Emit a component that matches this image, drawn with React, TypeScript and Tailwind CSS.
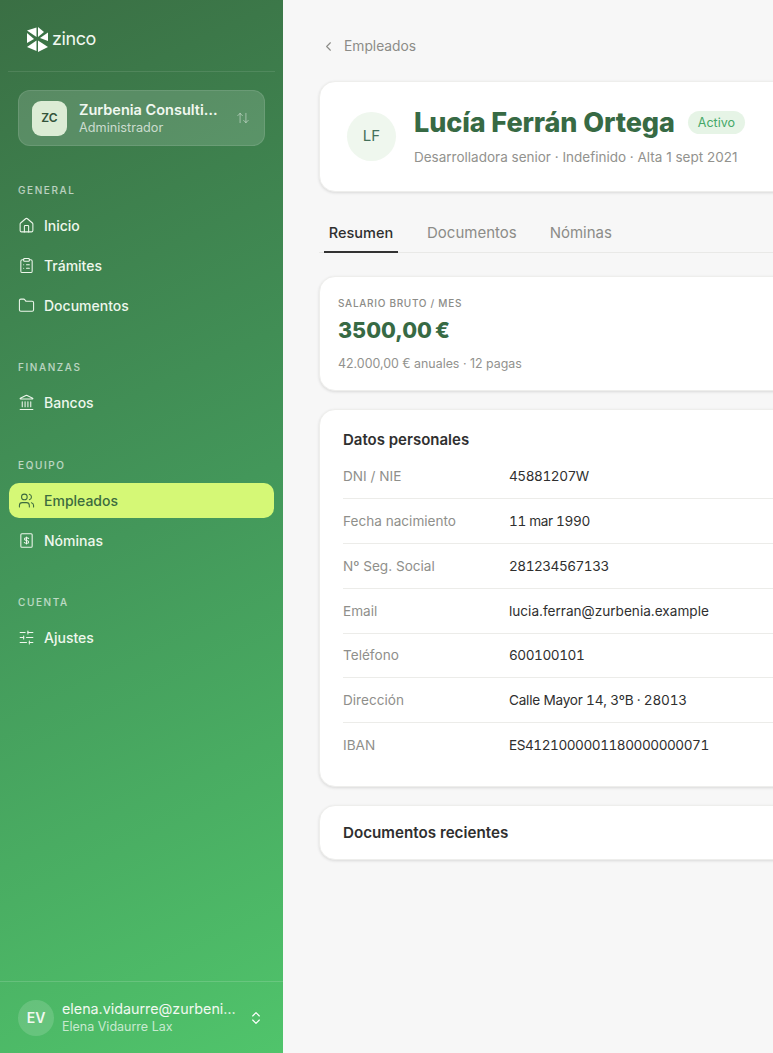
import { ChevronLeft, ChevronsUpDown, ArrowUpDown, House, ClipboardList, Folder, Landmark, Users, SlidersHorizontal } from "lucide-react";
import type { ComponentType, ReactNode } from "react";

type IconProps = { className?: string; strokeWidth?: number };
type NavItem = { label: string; icon: ComponentType<IconProps>; active?: boolean };

function PayslipIcon({ className, strokeWidth }: IconProps) {
  return (
    <svg viewBox="0 0 24 24" className={className} fill="none" stroke="currentColor" strokeWidth={strokeWidth} strokeLinecap="round" strokeLinejoin="round">
      <rect x="4" y="2.5" width="16" height="19" rx="1.5" />
      <path d="M12 7v10" />
      <path d="M15 9.2c-.5-.8-1.6-1.2-3-1.2-1.7 0-3 .8-3 2s1.3 1.7 3 2 3 .8 3 2-1.3 2-3 2c-1.4 0-2.5-.4-3-1.2" />
    </svg>
  );
}

const sections: { title: string; items: NavItem[]; mt: string }[] = [
  { title: "GENERAL", mt: "mt-[38px]", items: [{ label: "Inicio", icon: House }, { label: "Trámites", icon: ClipboardList }, { label: "Documentos", icon: Folder }] },
  { title: "FINANZAS", mt: "mt-[38px]", items: [{ label: "Bancos", icon: Landmark }] },
  { title: "EQUIPO", mt: "mt-[39px]", items: [{ label: "Empleados", icon: Users, active: true }, { label: "Nóminas", icon: PayslipIcon }] },
  { title: "CUENTA", mt: "mt-[38px]", items: [{ label: "Ajustes", icon: SlidersHorizontal }] },
];

// digits in the reference sit between tabular and proportional widths, hence the per-row tracking
const personal = [
  ["DNI / NIE", "45881207W", "tabular-nums tracking-[-0.46px]"],
  ["Fecha nacimiento", "11 mar 1990", "tabular-nums tracking-[-0.36px]"],
  ["Nº Seg. Social", "281234567133", "tabular-nums tracking-[-0.5px]"],
  ["Email", "lucia.ferran@zurbenia.example", ""],
  ["Teléfono", "600100101", "tabular-nums tracking-[-0.45px]"],
  ["Dirección", "Calle Mayor 14, 3ºB · 28013", "tabular-nums tracking-[-0.22px]"],
  ["IBAN", "ES4121000001180000000071", "tabular-nums tracking-[-0.46px]"],
];

function Logo() {
  return (
    <svg viewBox="0 0 21 25" className="h-[25px] w-[21px] shrink-0" fill="#fff">
      <path d="M0 3.5 L9.5 0.5 L9.5 10 Z" />
      <path d="M11 0 L17 5 L11 10 Z" />
      <path d="M21 5.5 L21 14 L13 11 Z" />
      <path d="M0 6 L7 12 L0 16 Z" />
      <path d="M0 20 L9.5 13.5 L9.5 24 Z" />
      <path d="M11 13.5 L21 20 L11 25 Z" />
    </svg>
  );
}

function Sidebar() {
  return (
    <aside className="flex h-full w-[283px] shrink-0 flex-col bg-[linear-gradient(155deg,#3a6f44_0%,#43975a_50%,#50c46b_100%)] text-white">
      <div className="mx-2 flex h-[72px] items-center gap-[4px] border-b border-white/10 pl-[19px] pr-2 pt-[7px]">
        <Logo />
        <span className="text-[18px] leading-none tracking-[-0.4px] text-[#f1f8f0]">zinco</span>
      </div>

      <div className="mx-[18px] mt-[18px] flex h-[56px] items-center gap-[12px] rounded-xl border border-white/10 bg-white/15 pl-[13px] pr-[14px]">
        <div className="flex h-[35px] w-[35px] shrink-0 items-center justify-center rounded-[9px] bg-[#dcecd5] text-[12px] font-semibold text-[#33533a]">ZC</div>
        <div className="min-w-0 flex-1">
          <div className="truncate text-[14.5px] font-semibold leading-[18px] text-[#f1f8f0]">Zurbenia Consulting SL</div>
          <div className="text-[12.7px] leading-[17px] text-white/70">Administrador</div>
        </div>
        <ArrowUpDown className="h-[14px] w-[14px] shrink-0 text-white/50" strokeWidth={1.5} />
      </div>

      <nav className="flex-1">
        {sections.map((s) => (
          <div key={s.title} className={s.mt}>
            <div className="mb-[11px] pl-[18px] text-[10px] font-medium leading-[13px] tracking-[1.6px] text-white/65">{s.title}</div>
            <div className="mx-[9px] flex flex-col gap-[5px]">
              {s.items.map((it) => (
                <div
                  key={it.label}
                  className={
                    it.active
                      ? "flex h-[35px] items-center gap-[9px] rounded-[10px] bg-[#d5f876] pl-[9px] text-[14px] font-medium text-[#3c6b3f]"
                      : "flex h-[35px] items-center gap-[9px] rounded-[10px] pl-[9px] text-[14px] font-medium text-[#eef7ec]"
                  }
                >
                  <it.icon className="h-[17px] w-[17px] shrink-0" strokeWidth={1.5} />
                  <span>{it.label}</span>
                </div>
              ))}
            </div>
          </div>
        ))}
      </nav>

      <div className="flex h-[72px] items-center gap-[8px] border-t border-white/15 pl-[18px] pr-[19px]">
        <div className="flex h-[36px] w-[36px] shrink-0 items-center justify-center rounded-full bg-white/15 text-[14px] font-semibold text-[#f1f8f0]">EV</div>
        <div className="min-w-0 flex-1">
          <div className="truncate text-[14.3px] leading-[18px] text-[#f1f8f0]">elena.vidaurre@zurbenia.example</div>
          <div className="truncate text-[12.5px] leading-[17px] text-white/70">Elena Vidaurre Lax</div>
        </div>
        <ChevronsUpDown className="h-[16px] w-[16px] shrink-0 text-white" strokeWidth={1.75} />
      </div>
    </aside>
  );
}

function Card({ className, children }: { className: string; children: ReactNode }) {
  return <section className={`rounded-[16px] border border-[#eeeeec] bg-white shadow-[0_1px_3px_rgba(0,0,0,0.12)] ${className}`}>{children}</section>;
}

export default function App() {
  return (
    <div className="flex h-screen w-full overflow-hidden bg-[#f7f7f7] font-['Inter',sans-serif]">
      <Sidebar />
      <main className="min-w-0 flex-1 overflow-hidden pl-[36px] pt-[37px]">
        <div className="w-[700px]">
          <div className="flex h-[18px] items-center gap-[8px] pl-[2px] text-[13.8px] text-[#8c8c88]">
            <ChevronLeft className="h-[15px] w-[15px]" strokeWidth={1.75} />
            <span>Empleados</span>
          </div>

          <Card className="mt-[26px] flex h-[111px] items-center gap-[18px] pl-[27px]">
            <div className="flex h-[49px] w-[49px] shrink-0 items-center justify-center rounded-full bg-[#eff7ee] text-[15px] text-[#44705a]">LF</div>
            <div className="-mt-[2px]">
              <div className="flex items-center gap-[13px]">
                <h1 className="text-[27px] font-extrabold leading-[34px] tracking-[-0.1px] text-[#376a44]">Lucía Ferrán Ortega</h1>
                <span className="rounded-full bg-[#e6f4e6] px-[10px] py-[3px] text-[12.5px] leading-[17px] text-[#45a868]">Activo</span>
              </div>
              <p className="mt-[8px] text-[13.5px] leading-[18px] text-[#92928e]">Desarrolladora senior · Indefinido · Alta 1 sept 2021</p>
            </div>
          </Card>

          <div className="mt-[21px] flex h-[40px] items-start border-b border-[#e9e9e7] text-[15px]">
            <div className="-mb-px ml-[5px] flex h-[40px] w-[74px] justify-center border-b-2 border-[#333] pt-[10px] text-[14.5px] font-medium leading-[20px] text-[#2f2f2f]">Resumen</div>
            <div className="ml-[29px] pt-[10px] leading-[20px] text-[#8c8c88]">Documentos</div>
            <div className="ml-[33px] pt-[10px] leading-[20px] text-[#8c8c88]">Nóminas</div>
          </div>

          <Card className="mt-[23px] h-[115px] pl-[18px] pt-[20px]">
            <div className="text-[10px] font-medium leading-[13px] tracking-[0.7px] text-[#8c8c88]">SALARIO BRUTO / MES</div>
            <div className="mt-[5px] text-[21.5px] font-extrabold leading-[30px] tracking-[-0.4px] text-[#376a44]">3500,00{"\u202f"}€</div>
            <div className="mt-[10px] text-[12.4px] leading-[17px] text-[#92928e]">42.000,00 € anuales · 12 pagas</div>
          </Card>

          <Card className="mt-[18px] h-[378px] px-[23px] pt-[20px]">
            <h2 className="text-[15px] font-semibold leading-[20px] text-[#2f2f2f]">Datos personales</h2>
            <div className="mt-[4.5px]">
              {personal.map(([k, v, digits], i) => (
                <div key={k} className={i === personal.length - 1 ? "flex h-[44.8px] items-center text-[13.6px]" : "flex h-[44.8px] items-center border-b border-[#ecece9] text-[13.6px]"}>
                  <div className="w-[166px] shrink-0 text-[#8f8f8b]">{k}</div>
                  <div className={`text-[#2f2f2f] ${digits}`}>{v}</div>
                </div>
              ))}
            </div>
          </Card>

          <Card className="mt-[18px] flex h-[55px] items-center px-[23px] pt-[1px]">
            <h2 className="text-[15.2px] font-semibold text-[#2f2f2f]">Documentos recientes</h2>
          </Card>
        </div>
      </main>
    </div>
  );
}
